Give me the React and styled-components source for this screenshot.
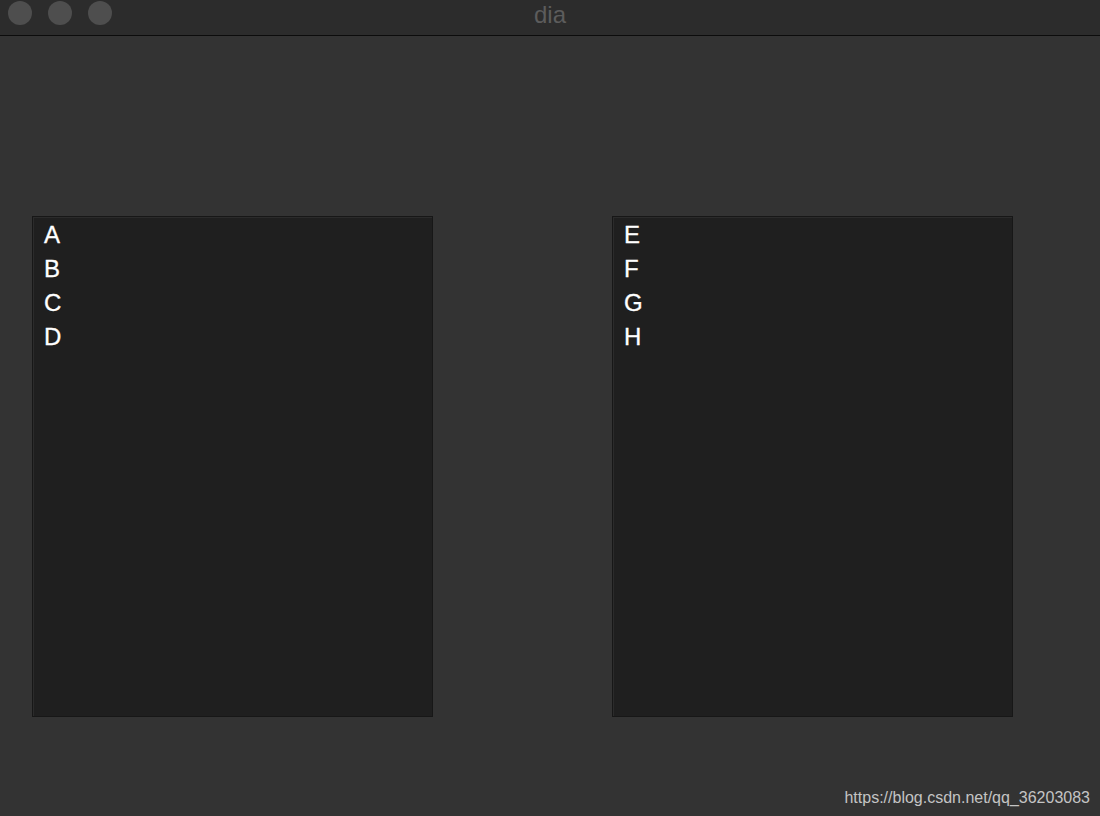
import React from "react";
import styled, { createGlobalStyle } from "styled-components";

const Global = createGlobalStyle`
  html, body { margin: 0; padding: 0; background: #333333; }
  body { font-family: "Liberation Sans", Arial, sans-serif; }
`;

const Window = styled.div`
  width: 1100px;
  height: 816px;
  display: flex;
  flex-direction: column;
  background: #333333;
  overflow: hidden;
`;

const TitleBar = styled.div`
  height: 35px;
  flex: 0 0 35px;
  border-bottom: 1px solid #0c0c0c;
  background: #2c2c2c;
  display: grid;
  grid-template-columns: 1fr auto 1fr;
  align-items: center;
`;

const Lights = styled.div`
  display: flex;
  gap: 16px;
  padding-left: 8px;
  align-self: start;
  padding-top: 1px;
`;

const Light = styled.span`
  width: 24px;
  height: 24px;
  border-radius: 50%;
  background: #4e4e4e;
`;

const Title = styled.div`
  font-size: 24px;
  color: #5c5c5c;
  line-height: 30px;
  margin-top: -6px;
  font-family: "Liberation Sans", Arial, sans-serif;
`;

const Main = styled.main`
  flex: 1;
  display: flex;
  flex-direction: column;
  padding: 180px 0 0 32px;
`;

const Panels = styled.div`
  display: flex;
  gap: 179px;
`;

const List = styled.ul`
  list-style: none;
  margin: 0;
  height: 498px;
  padding: 1px 0 0 11px;
  box-sizing: content-box;
  width: 388px;
  background: #1f1f1f;
  border: 1px solid #171717;
  box-shadow: inset 1px 1px 0 #2b2b2b;
`;

const Item = styled.li`
  font-size: 24px;
  line-height: 34px;
  color: #ffffff;
  font-family: "Liberation Sans", Arial, sans-serif;
  -webkit-text-stroke: 0.3px #ffffff;
`;

const Watermark = styled.div`
  margin-top: auto;
  align-self: flex-end;
  padding: 0 10px 9px 0;
  font-size: 16px;
  line-height: 18px;
  color: #c4c4c4;
  font-family: "Liberation Sans", Arial, sans-serif;
`;

const left = ["A", "B", "C", "D"];
const right = ["E", "F", "G", "H"];

export default function App() {
  return (
    <>
      <Global />
      <Window>
        <TitleBar>
          <Lights>
            <Light />
            <Light />
            <Light />
          </Lights>
          <Title>dia</Title>
          <div />
        </TitleBar>
        <Main>
          <Panels>
            <List>
              {left.map((l) => (
                <Item key={l}>{l}</Item>
              ))}
            </List>
            <List>
              {right.map((l) => (
                <Item key={l}>{l}</Item>
              ))}
            </List>
          </Panels>
          <Watermark>https://blog.csdn.net/qq_36203083</Watermark>
        </Main>
      </Window>
    </>
  );
}
